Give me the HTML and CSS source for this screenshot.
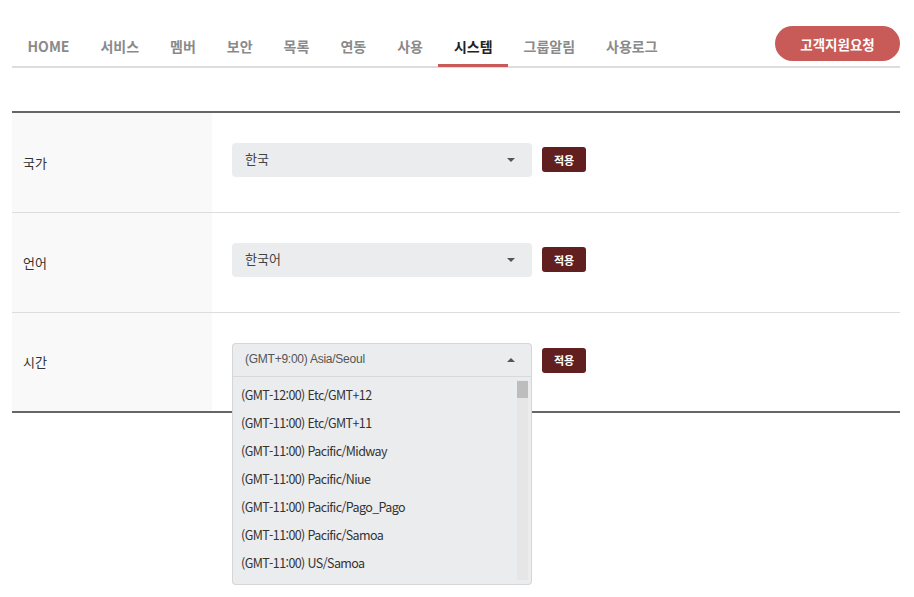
FILE: index.html
```html
<!DOCTYPE html>
<html lang="ko">
<head>
<meta charset="utf-8">
<title>시스템</title>
<link rel="stylesheet" href="styles.css">
</head>
<body>
<div class="wrap">
  <nav class="nav">
    <ul class="tabs">
      <li class="tab">HOME</li>
      <li class="tab">서비스</li>
      <li class="tab">멤버</li>
      <li class="tab">보안</li>
      <li class="tab">목록</li>
      <li class="tab">연동</li>
      <li class="tab">사용</li>
      <li class="tab active">시스템</li>
      <li class="tab">그룹알림</li>
      <li class="tab">사용로그</li>
    </ul>
    <button class="support">고객지원요청</button>
  </nav>

  <div class="table">
    <div class="row">
      <div class="label">국가</div>
      <div class="cell">
        <div class="select"><span class="val">한국</span><span class="caret down"></span></div>
        <button class="apply">적용</button>
      </div>
    </div>
    <div class="row">
      <div class="label">언어</div>
      <div class="cell">
        <div class="select"><span class="val">한국어</span><span class="caret down"></span></div>
        <button class="apply">적용</button>
      </div>
    </div>
    <div class="row last">
      <div class="label">시간</div>
      <div class="cell">
        <div class="select-open">
          <div class="select head"><span class="val latin">(GMT+9:00) Asia/Seoul</span><span class="caret up"></span></div>
          <div class="dropdown">
            <ul class="options">
              <li>(GMT-12:00) Etc/GMT+12</li>
              <li>(GMT-11:00) Etc/GMT+11</li>
              <li>(GMT-11:00) Pacific/Midway</li>
              <li>(GMT-11:00) Pacific/Niue</li>
              <li>(GMT-11:00) Pacific/Pago_Pago</li>
              <li>(GMT-11:00) Pacific/Samoa</li>
              <li>(GMT-11:00) US/Samoa</li>
            </ul>
            <div class="scrollbar"><div class="thumb"></div></div>
          </div>
        </div>
        <button class="apply">적용</button>
      </div>
    </div>
  </div>
</div>
</body>
</html>
```

FILE: styles.css
```css
* { box-sizing: border-box; }
html, body { margin: 0; padding: 0; background: #fff; }
body {
  font-family: "Noto Sans CJK KR", "Noto Sans", sans-serif;
  color: #333;
  min-height: 597px;
}
.wrap {
  width: 888px;
  margin-left: 12px;
  padding-top: 26px;
  padding-bottom: 200px;
}
.nav {
  display: flex;
  justify-content: space-between;
  align-items: flex-start;
  border-bottom: 2px solid #dddddd;
  height: 42px;
}
.tabs {
  list-style: none;
  margin: 0;
  padding: 0;
  display: flex;
  height: 40px;
}
.tab {
  padding: 0 15.5px;
  height: 41px;
  line-height: 40px;
  font-size: 14px;
  font-weight: 700;
  color: #8a8a8a;
  border-bottom: 3px solid transparent;
}
.tab.active {
  color: #222;
  border-bottom-color: #c85a58;
  margin-bottom: -1px;
}
.support {
  width: 125px;
  height: 35px;
  border: none;
  border-radius: 18px;
  background: #c85a58;
  color: #fff;
  font-family: "Noto Sans CJK KR", sans-serif;
  font-weight: 700;
  font-size: 13.5px;
  padding: 0;
}
.table {
  margin-top: 43px;
  border-top: 2px solid #666;
  border-bottom: 2px solid #666;
}
.row {
  display: flex;
  height: 100px;
  border-bottom: 1px solid #dddddd;
}
.row.last {
  height: 98px;
  border-bottom: none;
}
.label {
  width: 200px;
  background: #f9f9f9;
  padding-left: 11px;
  padding-bottom: 1px;
  display: flex;
  align-items: center;
  font-size: 13px;
  color: #333;
}
.cell {
  flex: 1;
  display: flex;
  align-items: center;
  padding-left: 20px;
  padding-bottom: 6px;
}
.row.last .cell { padding-bottom: 4px; }
.select {
  width: 300px;
  height: 34px;
  background: #ebecee;
  border-radius: 4px;
  display: flex;
  align-items: center;
  justify-content: space-between;
  padding: 0 17px 3px 13px;
  font-size: 13px;
  color: #444;
}
.val { line-height: 1; }
.val.latin {
  font-family: "Liberation Sans", Arial, sans-serif;
  font-size: 12px;
  letter-spacing: -0.25px;
  color: #555;
}
.caret {
  width: 0;
  height: 0;
  border-left: 4px solid transparent;
  border-right: 4px solid transparent;
}
.caret.down { border-top: 4px solid #555; margin-top: 3px; }
.caret.up { border-bottom: 4px solid #555; margin-top: 3px; }
.apply {
  margin-left: 10px;
  width: 44px;
  height: 25px;
  border: none;
  border-radius: 3px;
  background: #611f1f;
  color: #fff;
  font-family: "Noto Sans CJK KR", sans-serif;
  font-weight: 700;
  font-size: 11px;
  padding: 0;
}
.select-open {
  position: relative;
  width: 300px;
  height: 34px;
}
.select.head {
  border: 1px solid #d6d6d6;
  border-bottom: 1px solid #d9d9d9;
  border-radius: 4px 4px 0 0;
  padding-left: 12px;
  padding-right: 16px;
}
.dropdown {
  position: absolute;
  left: 0;
  top: 34px;
  width: 300px;
  height: 208px;
  background: #ebecee;
  border: 1px solid #d6d6d6;
  border-top: none;
  border-radius: 0 0 4px 4px;
  display: flex;
  overflow: hidden;
  z-index: 2;
}
.options {
  list-style: none;
  margin: 0;
  padding: 4px 0 0 8px;
  flex: 1;
}
.options li {
  height: 28px;
  line-height: 28px;
  font-size: 12.5px;
  letter-spacing: -0.6px;
  color: #333;
  white-space: nowrap;
}
.scrollbar {
  width: 11px;
  margin: 3px 3px 4px 0;
  background: #e6e6e6;
}
.thumb {
  height: 17px;
  background: #bdbdbd;
  margin-top: 1px;
}
```
